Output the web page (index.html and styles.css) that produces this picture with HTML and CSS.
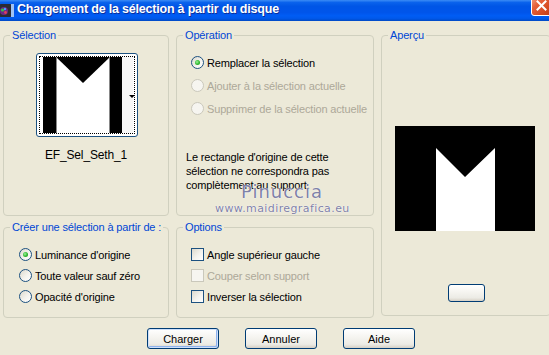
FILE: index.html
```html
<!DOCTYPE html>
<html lang="fr">

<head>
  <meta charset="UTF-8">
  <meta name="viewport" content="width=device-width, initial-scale=1.0">
  <title>Chargement de la sélection à partir du disque</title>
  <link rel="stylesheet" href="styles.css">
</head>

<body>
  <div class="titlebar">
    <svg class="app-icon" viewBox="0 0 16 16">
      <rect x="1" y="2" width="13" height="13" rx="2" fill="#2b2b33" />
      <rect x="13" y="2" width="3" height="13" fill="#9fc3f5" />
      <circle cx="6" cy="9" r="4" fill="#6a2a86" />
      <circle cx="4.5" cy="8" r="1.6" fill="#33c24a" />
      <circle cx="7.5" cy="10.5" r="1.4" fill="#e0405a" />
      <circle cx="7" cy="7" r="1.2" fill="#4aa0ff" />
    </svg>
    <span class="title">Chargement de la sélection à partir du disque</span>
    <span class="close">
      <svg viewBox="0 0 11 11" width="11" height="11">
        <path d="M1.5 1.5 L9.5 9.5 M9.5 1.5 L1.5 9.5" stroke="#fff" stroke-width="2" stroke-linecap="square" />
      </svg>
    </span>
  </div>

  <div class="client">
    <div class="panes">
      <fieldset class="group sel">
        <legend>Sélection</legend>
        <div class="thumb">
          <div class="thumb-frame">
            <svg viewBox="0 0 90 76" width="90" height="76">
              <rect width="90" height="76" fill="#fff" />
              <rect width="13" height="76" fill="#000" />
              <rect x="67" width="12" height="76" fill="#000" />
              <rect x="79" width="11" height="76" fill="#f7f7f7" />
              <polygon points="13,0 67,0 40,26" fill="#000" />
              <rect x="13" width="1" height="76" fill="#888" />
              <rect x="66" width="1" height="76" fill="#888" />
            </svg>
          </div>
          <span class="drop-arrow"></span>
        </div>
        <div class="thumb-name">EF_Sel_Seth_1</div>
      </fieldset>

      <fieldset class="group op">
        <legend>Opération</legend>
        <ul class="choices">
          <li><span class="radio on"></span>Remplacer la sélection</li>
          <li class="disabled"><span class="radio"></span>Ajouter à la sélection actuelle</li>
          <li class="disabled"><span class="radio"></span>Supprimer de la sélection actuelle</li>
        </ul>
        <p class="note">Le rectangle d'origine de cette<br>sélection ne correspondra pas<br>complètement au support.</p>
        <div class="watermark">
          <div class="wm-name">Pinuccia</div>
          <div class="wm-url">www.maidiregrafica.eu</div>
        </div>
      </fieldset>

      <fieldset class="group preview">
        <legend>Aperçu</legend>
        <svg class="preview-img" viewBox="0 0 140 105" width="140" height="105">
          <rect width="140" height="105" fill="#000" />
          <polygon points="41,22 70,51 100,22 100,105 41,105" fill="#fff" />
        </svg>
        <button class="btn small"></button>
      </fieldset>

      <fieldset class="group source">
        <legend>Créer une sélection à partir de :</legend>
        <ul class="choices tight">
          <li><span class="radio on"></span>Luminance d'origine</li>
          <li><span class="radio"></span>Toute valeur sauf zéro</li>
          <li><span class="radio"></span>Opacité d'origine</li>
        </ul>
      </fieldset>

      <fieldset class="group options">
        <legend>Options</legend>
        <ul class="choices tight">
          <li><span class="check"></span>Angle supérieur gauche</li>
          <li class="disabled"><span class="check"></span>Couper selon support</li>
          <li><span class="check"></span>Inverser la sélection</li>
        </ul>
      </fieldset>
    </div>

    <div class="actions">
      <button class="btn default">Charger</button>
      <button class="btn">Annuler</button>
      <button class="btn">Aide</button>
    </div>
  </div>
</body>

</html>
```

FILE: styles.css
```css
* {
  margin: 0;
  padding: 0;
  box-sizing: border-box;
}

body {
  background: #ece9d8;
  font: 11px "Liberation Sans", Arial, sans-serif;
  letter-spacing: -0.15px;
  color: #000;
  overflow: hidden;
}

/* title bar */

.titlebar {
  display: flex;
  align-items: flex-start;
  height: 21px;
  color: #fff;
  background: linear-gradient(180deg, #3b8cf5 0%, #0a62ec 12%, #0055e6 30%, #0055eb 60%, #005df5 75%, #0058ea 88%, #0049c4 100%);
}

.app-icon {
  flex: none;
  width: 16px;
  height: 16px;
  margin: 2px 3px 0 -2px;
}

.title {
  flex: 1;
  font-weight: bold;
  font-size: 12.5px;
  letter-spacing: -0.2px;
  line-height: 17px;
  margin-top: 1px;
  white-space: nowrap;
  text-shadow: 1px 1px #0c2f9c;
}

.close {
  flex: none;
  display: flex;
  align-items: center;
  justify-content: center;
  width: 21px;
  height: 21px;
  margin: -5px -3px 0 0;
  border: 1px solid #fff;
  border-radius: 3px;
  background: linear-gradient(135deg, #f3a88e 0%, #e5603a 35%, #d64b22 70%, #c23c16 100%);
}

/* dialog body */

.client {
  padding: 8px 0 0 3px;
}

.panes {
  display: grid;
  grid-template-columns: 166px 198px 170px;
  grid-template-rows: 187px 97px;
  column-gap: 7px;
  row-gap: 5px;
}

.group {
  position: relative;
  min-width: 0;
  border: 1px solid #d0d0bf;
  border-radius: 4px;
}

.group legend {
  margin-left: 6px;
  padding: 0 2px;
  line-height: 13px;
  white-space: nowrap;
  color: #0046d5;
}

.preview {
  grid-column: 3;
  grid-row: 1 / 3;
  align-self: start;
  height: 287px;
}

/* selection thumbnail */

.sel {
  display: flex;
  flex-direction: column;
  align-items: center;
}

.thumb {
  position: relative;
  width: 102px;
  height: 84px;
  margin: 11px 0 0 2px;
  padding: 2px;
  border: 1px solid #1c5180;
  border-radius: 3px;
  background: #fff;
}

.thumb-frame {
  height: 100%;
  padding: 0 0 0 3px;
  border: 1px dotted #000;
}

.thumb-frame svg {
  display: block;
}

.drop-arrow {
  position: absolute;
  right: 2px;
  top: 41px;
  border-left: 3px solid transparent;
  border-right: 3px solid transparent;
  border-top: 3px solid #000;
}

.thumb-name {
  margin-top: 11px;
  line-height: 14px;
  font-size: 12px;
}

/* radio and check lists */

.choices {
  list-style: none;
  margin: 9px 0 0 14px;
}

.choices li {
  display: flex;
  align-items: center;
  height: 23px;
}

.choices.tight {
  margin: 10px 0 0 15px;
}

.choices.tight li {
  height: 21px;
}

.options .choices.tight {
  margin-left: 14px;
}

.disabled {
  color: #aca899;
}

.radio,
.check {
  flex: none;
  display: flex;
  align-items: center;
  justify-content: center;
  width: 13px;
  height: 13px;
  margin-right: 3px;
  border: 1px solid #1c5180;
  background: linear-gradient(135deg, #dcd9cd 0%, #f4f3ee 55%, #fff 100%);
}

.radio {
  border-radius: 50%;
}

.radio.on::after {
  content: '';
  width: 5px;
  height: 5px;
  border-radius: 50%;
  background: radial-gradient(circle at 40% 40%, #9af59a 0%, #2fb52f 55%, #1d911d 100%);
}

.disabled .radio,
.disabled .check {
  border-color: #cac8bb;
  background: #f6f5f0;
}

.note {
  margin: 30px 0 0 9px;
  line-height: 14px;
}

.watermark {
  position: absolute;
  left: 38px;
  top: 139px;
  width: 124px;
  text-align: center;
  color: #7f81a6;
  font-family: "DejaVu Sans", sans-serif;
  text-shadow: 0 0 1px #fff, 0 0 1px #fff;
}

.wm-name {
  padding-left: 10px;
  font-size: 18px;
  line-height: 22px;
  letter-spacing: 1px;
}

.wm-url {
  font-size: 11px;
  line-height: 12px;
  letter-spacing: 0.4px;
}

/* preview */

.preview-img {
  display: block;
  margin: 84px 0 0 13px;
}

/* buttons */

.btn {
  display: block;
  height: 21px;
  width: 72px;
  font: 11px "Liberation Sans", Arial, sans-serif;
  color: #000;
  border: 1px solid #003c74;
  border-radius: 3px;
  background: linear-gradient(180deg, #fff 0%, #f6f5f1 40%, #ecebe5 80%, #d6d0c5 100%);
}

.btn.default {
  box-shadow: inset 0 0 0 1px #cee0fb, inset -1px -1px 0 1px #8fb2ec;
}

.btn.small {
  width: 37px;
  height: 18px;
  margin: 53px 0 0 66px;
}

.actions {
  display: flex;
  gap: 26px;
  margin-top: 10px;
  padding-left: 144px;
}
```
